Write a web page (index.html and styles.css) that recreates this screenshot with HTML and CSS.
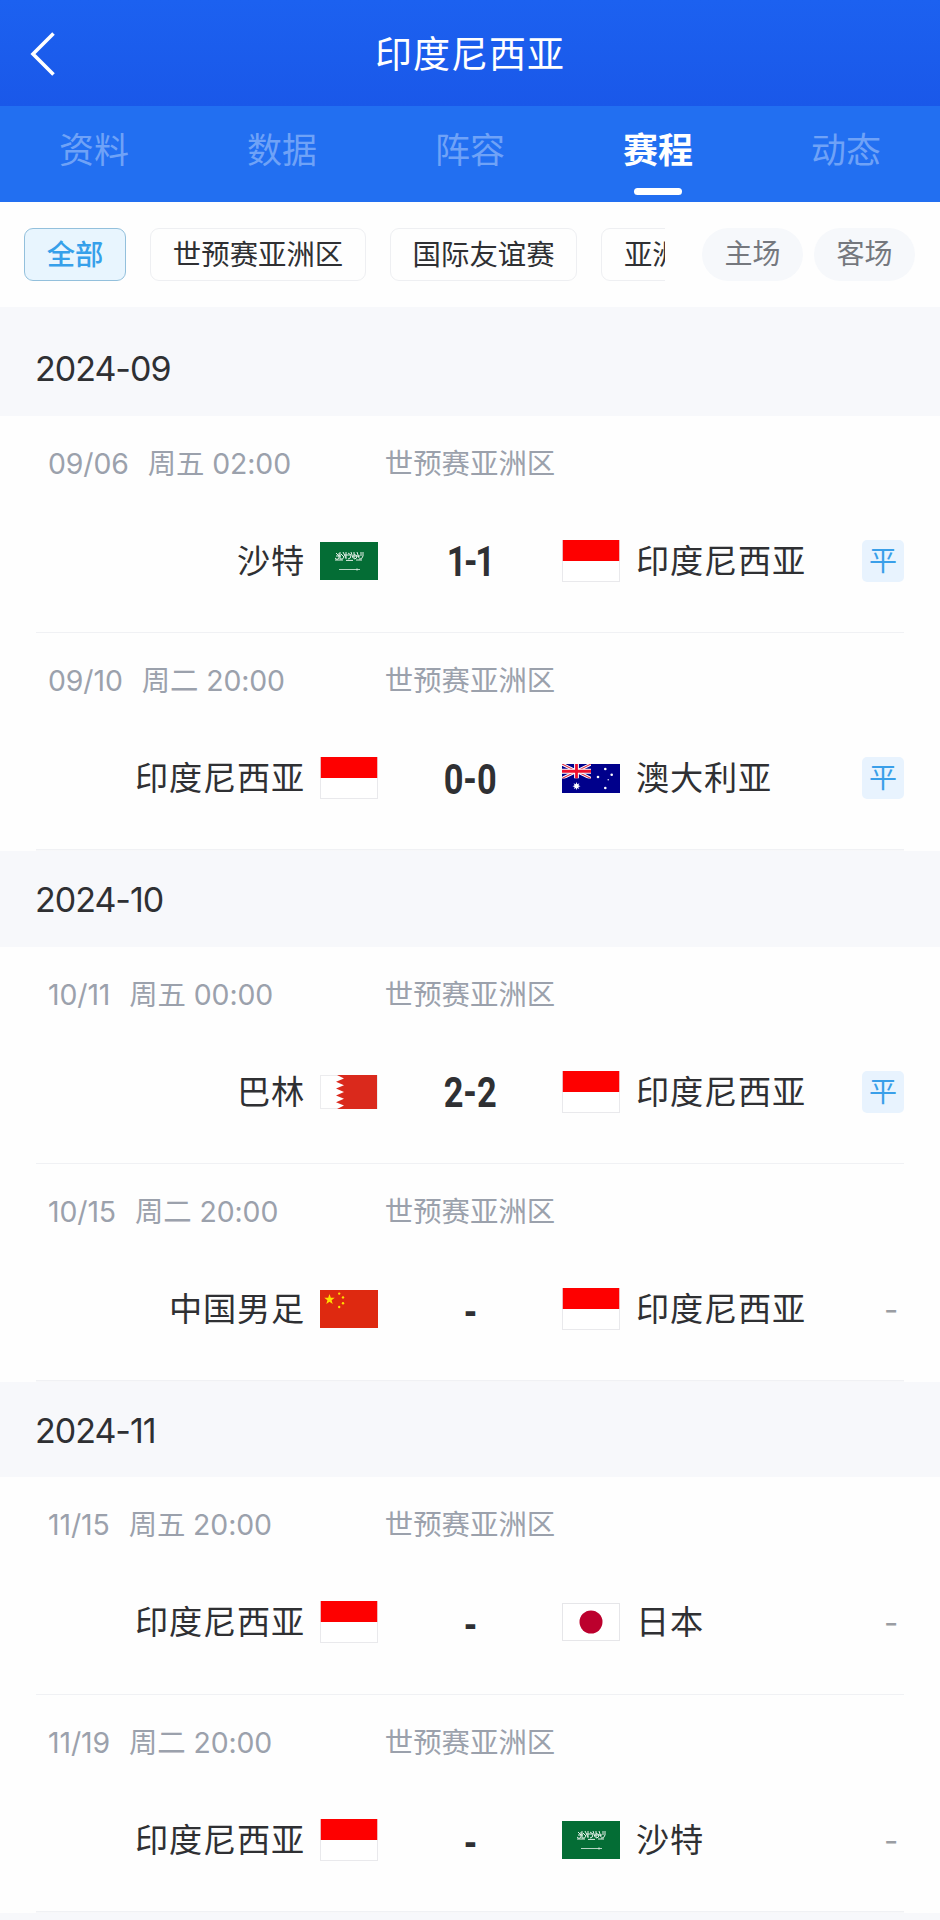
FILE: index.html
```
<!DOCTYPE html>
<html lang="zh-CN">
<head>
    <meta charset="UTF-8">
    <meta name="viewport" content="width=device-width, initial-scale=1.0">
    <title>印度尼西亚 - 赛程</title>
    <link rel="stylesheet" href="styles.css">
</head>
<body>
    <!-- Flag symbols -->
    <svg class="symbols" width="0" height="0">
        <symbol id="flag-id" viewBox="0 0 58 42">
            <rect x="0.5" y="0.5" width="57" height="41" fill="#fff" stroke="#e9e9ec"/>
            <rect x="0.8" y="0" width="56.4" height="21" fill="#fe0000"/>
        </symbol>
        <symbol id="flag-sa" viewBox="0 0 58 38">
            <rect width="58" height="38" fill="#046d35"/>
            <g fill="none" stroke="#e4f0e8" stroke-width="1">
                <path d="M15 16q2 3 4 0v-5M16 11l3 3M20 10v7q3 1 4-2l-3-3M23 10l3 6M26 10v7M28 17q3 0 3-4l-3-2M31 10l2 6M34 10v7q3 0 3-3l-3-2M37 10l2 6M39 17q3 1 4-3v-4M41 10v4M15 18h8M26 18.4h7M36 18h6M16 14h5M24 13h6M33 14h7"/>
                <path d="M19 27.5h21M37 26.3v2.4" stroke-width="0.8"/>
            </g>
        </symbol>
        <symbol id="flag-au" viewBox="0 0 58 29">
            <rect width="58" height="29" fill="#00008b"/>
            <svg width="29" height="14.5" viewBox="0 0 29 14.5">
                <path d="M0 0l29 14.5M29 0L0 14.5" stroke="#fff" stroke-width="3"/>
                <path d="M0 0l29 14.5M29 0L0 14.5" stroke="#e0203a" stroke-width="1.1"/>
                <path d="M14.5 0v14.5M0 7.25h29" stroke="#fff" stroke-width="4.8"/>
                <path d="M14.5 0v14.5M0 7.25h29" stroke="#ee1030" stroke-width="2.8"/>
            </svg>
            <g fill="#fff">
                <path d="M14.5 18l.8 2.2 2.1-.9-1 2 2.1.9-2.2.7.9 2.1-2-1.1-.7 2.3-.7-2.3-2 1.1.9-2.1-2.2-.7 2.1-.9-1-2 2.1.9z"/>
                <circle cx="43.3" cy="5" r="1.3"/>
                <circle cx="36" cy="13" r="1.3"/>
                <circle cx="49.7" cy="10.7" r="1.3"/>
                <circle cx="43.3" cy="24" r="1.3"/>
                <circle cx="46.2" cy="15.7" r="0.7"/>
            </g>
        </symbol>
        <symbol id="flag-bh" viewBox="0 0 58 34">
            <rect x="0.5" y="0.5" width="57" height="33" fill="#fff" stroke="#ececee"/>
            <path d="M57 0H17l7 3.4-8 3.4 8 3.4-8 3.4 8 3.4-8 3.4 8 3.4-8 3.4 8 3.4-7 3.4h40z" fill="#da291c"/>
        </symbol>
        <symbol id="flag-cn" viewBox="0 0 58 38">
            <rect width="58" height="38" fill="#de2910"/>
            <g fill="#ffde00">
                <path d="M9.5 4l1.3 3.8h3.9l-3.1 2.4 1.1 3.8-3.2-2.3L6.3 14l1.1-3.8-3.1-2.4h3.9z"/>
                <circle cx="19.2" cy="3.6" r="1.2"/>
                <circle cx="23" cy="7.4" r="1.2"/>
                <circle cx="23" cy="13.2" r="1.2"/>
                <circle cx="19.2" cy="17" r="1.2"/>
            </g>
        </symbol>
        <symbol id="flag-jp" viewBox="0 0 58 38">
            <rect x="0.5" y="0.5" width="57" height="37" fill="#fff" stroke="#e6e6e9"/>
            <circle cx="29" cy="19" r="11.5" fill="#bc002d"/>
        </symbol>
    </svg>

    <header class="header">
        <svg class="back" width="26" height="44" viewBox="0 0 26 44">
            <path d="M23.5 1.5L3 22l20.500 20.500" fill="none" stroke="#fff" stroke-width="3.6"/>
        </svg>
        <h1>印度尼西亚</h1>
    </header>

    <nav class="tabs">
        <a class="tab">资料</a>
        <a class="tab">数据</a>
        <a class="tab">阵容</a>
        <a class="tab active">赛程</a>
        <a class="tab">动态</a>
    </nav>

    <div class="filters">
        <div class="leagues">
            <span class="chip active">全部</span>
            <span class="chip">世预赛亚洲区</span>
            <span class="chip">国际友谊赛</span>
            <span class="chip">亚洲杯</span>
        </div>
        <div class="venues">
            <span class="venue">主场</span>
            <span class="venue">客场</span>
        </div>
    </div>

    <main class="schedule">
        <h2 class="month">2024-09</h2>
        <div class="match">
            <div class="info">
                <div class="date"><span>09/06</span><span>周五 02:00</span></div>
                <div class="league">世预赛亚洲区</div>
            </div>
            <div class="teams">
                <div class="team home">沙特<svg class="flag"><use href="#flag-sa"/></svg></div>
                <div class="score"><span class="ones">1-1</span></div>
                <div class="team"><svg class="flag tall"><use href="#flag-id"/></svg>印度尼西亚</div>
                <div class="result"><span class="draw">平</span></div>
            </div>
        </div>
        <div class="match">
            <div class="info">
                <div class="date"><span>09/10</span><span>周二 20:00</span></div>
                <div class="league">世预赛亚洲区</div>
            </div>
            <div class="teams">
                <div class="team home">印度尼西亚<svg class="flag tall"><use href="#flag-id"/></svg></div>
                <div class="score"><span>0-0</span></div>
                <div class="team"><svg class="flag wide"><use href="#flag-au"/></svg>澳大利亚</div>
                <div class="result"><span class="draw">平</span></div>
            </div>
        </div>

        <h2 class="month">2024-10</h2>
        <div class="match">
            <div class="info">
                <div class="date"><span>10/11</span><span>周五 00:00</span></div>
                <div class="league">世预赛亚洲区</div>
            </div>
            <div class="teams">
                <div class="team home">巴林<svg class="flag short"><use href="#flag-bh"/></svg></div>
                <div class="score"><span>2-2</span></div>
                <div class="team"><svg class="flag tall"><use href="#flag-id"/></svg>印度尼西亚</div>
                <div class="result"><span class="draw">平</span></div>
            </div>
        </div>
        <div class="match">
            <div class="info">
                <div class="date"><span>10/15</span><span>周二 20:00</span></div>
                <div class="league">世预赛亚洲区</div>
            </div>
            <div class="teams">
                <div class="team home">中国男足<svg class="flag"><use href="#flag-cn"/></svg></div>
                <div class="score pending"><span>-</span></div>
                <div class="team"><svg class="flag tall"><use href="#flag-id"/></svg>印度尼西亚</div>
                <div class="result"><span class="none">-</span></div>
            </div>
        </div>

        <h2 class="month">2024-11</h2>
        <div class="match">
            <div class="info">
                <div class="date"><span>11/15</span><span>周五 20:00</span></div>
                <div class="league">世预赛亚洲区</div>
            </div>
            <div class="teams">
                <div class="team home">印度尼西亚<svg class="flag tall"><use href="#flag-id"/></svg></div>
                <div class="score pending"><span>-</span></div>
                <div class="team"><svg class="flag"><use href="#flag-jp"/></svg>日本</div>
                <div class="result"><span class="none">-</span></div>
            </div>
        </div>
        <div class="match">
            <div class="info">
                <div class="date"><span>11/19</span><span>周二 20:00</span></div>
                <div class="league">世预赛亚洲区</div>
            </div>
            <div class="teams">
                <div class="team home">印度尼西亚<svg class="flag tall"><use href="#flag-id"/></svg></div>
                <div class="score pending"><span>-</span></div>
                <div class="team"><svg class="flag"><use href="#flag-sa"/></svg>沙特</div>
                <div class="result"><span class="none">-</span></div>
            </div>
        </div>
    </main>
</body>
</html>
```
FILE: styles.css
```
* {
    box-sizing: border-box;
}
body {
    margin: 0;
    height: 1920px;
    overflow: hidden;
    background-color: #f7f8fb;
    color: #2f3033;
    font-family: Inter, "Noto Sans CJK SC", sans-serif;
}
.symbols {
    position: absolute;
}
.header {
    display: grid;
    grid-template-columns: 100px 1fr 100px;
    align-items: center;
    height: 106px;
    background: linear-gradient(#1c61f0, #1a58e9);
    color: white;
}
.back {
    margin: 2px 0 0 30px;
}
.header h1 {
    margin: 0;
    padding-bottom: 2px;
    text-align: center;
    font-size: 37px;
    font-weight: 400;
    letter-spacing: 1px;
}
.tabs {
    display: grid;
    grid-template-columns: repeat(5, 1fr);
    height: 96px;
    background-color: #226ff1;
}
.tab {
    position: relative;
    text-align: center;
    line-height: 88px;
    font-size: 35px;
    color: #6fa2f7;
}
.tab.active {
    color: white;
    font-weight: bold;
}
.tab.active::after {
    content: "";
    position: absolute;
    left: 50%;
    bottom: 7px;
    width: 48px;
    height: 7px;
    margin-left: -24px;
    border-radius: 4px;
    background-color: white;
}
.filters {
    display: flex;
    align-items: center;
    justify-content: space-between;
    height: 105px;
    padding: 0 25px 0 24px;
    background-color: #fefefe;
    font-size: 28.4px;
}
.leagues {
    display: flex;
    gap: 24px;
    width: 641px;
    overflow: hidden;
}
.chip {
    flex: none;
    height: 53px;
    padding: 0 21.7px;
    border: 1px solid #eeeff2;
    border-radius: 9px;
    line-height: 51px;
}
.chip.active {
    border-color: #93c0dc;
    background-color: #e8f5fe;
    color: #36a0ea;
    font-weight: 500;
}
.venues {
    display: flex;
    gap: 11px;
}
.venue {
    width: 101px;
    height: 53px;
    border-radius: 27px;
    background-color: #f6f8fb;
    color: #75787e;
    text-align: center;
    line-height: 52px;
    font-size: 28px;
}
.schedule {
    padding-top: 13px;
}
.month {
    height: 95.7px;
    margin: 0;
    padding-left: 35px;
    line-height: 97px;
    font-size: 34px;
    font-weight: 400;
    letter-spacing: -1px;
}
.match {
    height: 217.6px;
    padding: 0 36px;
    background: linear-gradient(#f0f1f4, #f0f1f4) 36px 100% / 868px 1.5px no-repeat #fefefe;
}
.info {
    display: grid;
    grid-template-columns: 1fr 200px 1fr;
    align-items: baseline;
    height: 97px;
    padding-top: 27px;
    color: #9ba1ac;
    font-size: 28.4px;
    line-height: 42px;
}
.date {
    display: flex;
    align-items: baseline;
    gap: 19px;
    padding-left: 12px;
    letter-spacing: -0.1px;
}
.league {
    text-align: center;
}
.teams {
    display: grid;
    grid-template-columns: 342px 184px 1fr 42px;
    align-items: center;
    height: 96px;
    font-size: 33.2px;
}
.team {
    display: flex;
    align-items: center;
    gap: 16px;
    height: 42px;
    letter-spacing: 0.8px;
    line-height: 40px;
    white-space: nowrap;
}
.home {
    justify-content: flex-end;
    gap: 15px;
}
.flag {
    flex: none;
    width: 58px;
    height: 38px;
}
.flag.tall {
    height: 42px;
}
.flag.short {
    height: 34px;
}
.flag.wide {
    height: 29px;
}
.score {
    padding-top: 1px;
    text-align: center;
    font-family: Roboto, sans-serif;
    font-size: 43px;
    font-weight: bold;
}
.score.pending {
    padding-top: 6px;
}
.score span {
    display: inline-block;
    transform: scaleX(0.8);
}
.score .ones {
    letter-spacing: -3px;
}
.result {
    color: #9a9da3;
}
.draw {
    display: block;
    height: 42px;
    border-radius: 5px;
    background-color: #e8f3fe;
    color: #3a9fe9;
    text-align: center;
    line-height: 42px;
    font-size: 28px;
}
.none {
    display: block;
    padding-left: 22px;
    font-size: 31px;
}
```
